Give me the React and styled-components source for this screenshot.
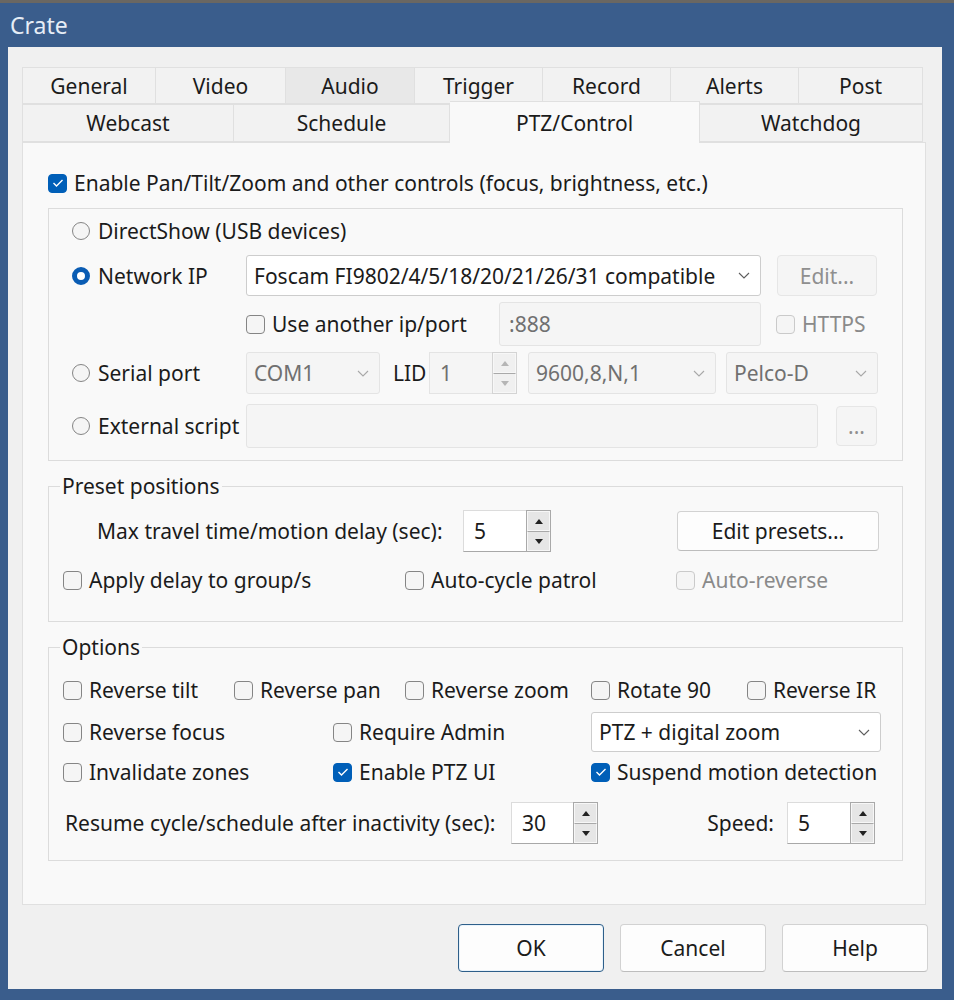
import React from 'react'
import styled, { createGlobalStyle } from 'styled-components'

const GlobalStyle = createGlobalStyle`
  html, body { margin: 0; padding: 0; background: #3a5d8c; }
  body { font-family: "Noto Sans", "Open Sans", sans-serif; color: #1b1b1b; font-size: 21px; }
  * { box-sizing: border-box; }
`;

const Frame = styled.div`
  width: 954px;
  height: 1000px;
  background: #3a5d8c;
  border-top: 3px solid #6a6762;
  display: flex;
  flex-direction: column;
`;

const TitleBar = styled.div`
  height: 44px;
  padding-left: 10px;
  display: flex;
  align-items: center;
  color: #e6edf6;
  font-size: 23px;
`;

const Client = styled.div`
  margin: 0 12px 0 8px;
  height: 942px;
  background: #f0f0f0;
  padding: 20px 16px 0 14px;
  display: flex;
  flex-direction: column;
`;

const TabRow = styled.div`
  display: flex;
  height: ${p => p.$h}px;
  margin-right: 3px;
`;

const Tab = styled.div`
  width: ${p => p.$w}px;
  display: flex;
  align-items: center;
  justify-content: center;
  background: ${p => (p.$active ? '#f9f9f9' : p.$hover ? '#e8e8e8' : '#f2f2f2')};
  border: 1px solid #e0e0e0;
  border-bottom: ${p => (p.$active ? 'none' : '1px solid #e0e0e0')};
  margin: ${p => (p.$active ? '-3px 0 -1px 0' : '0')};
  position: relative;
  z-index: ${p => (p.$active ? 1 : 0)};
  &:not(:first-child) { border-left: none; }
`;

const Pane = styled.div`
  height: 763px;
  background: #f9f9f9;
  border: 1px solid #e0e0e0;
  padding: 0 22px 0 25px;
  display: flex;
  flex-direction: column;
`;

const Line = styled.div`
  display: flex;
  align-items: center;
  height: ${p => p.$h || 30}px;
  margin-top: ${p => p.$mt || 0}px;
`;

const Group = styled.div`
  margin-top: 11px;
  border: 1px solid #dcdcdc;
  padding: 0 0 12px 23px;
`;

const Field = styled.fieldset`
  margin: ${p => p.$mt}px 0 0 0;
  border: 1px solid #dcdcdc;
  padding: 0 0 ${p => p.$pb}px 14px;
  min-width: 0;
`;

const Legend = styled.legend`
  padding: 0 2px;
  margin-left: -3px;
  line-height: 27px;
`;

const SourceRow = styled.div`
  display: grid;
  grid-template-columns: 174px 1fr;
  align-items: center;
  height: ${p => p.$h}px;
  margin-top: ${p => p.$mt}px;
`;

const Controls = styled.div`
  display: flex;
  align-items: center;
  height: 100%;
`;

const GridRow = styled.div`
  display: grid;
  grid-template-columns: ${p => p.$cols};
  align-items: center;
  height: ${p => p.$h || 30}px;
  margin-top: ${p => p.$mt || 0}px;
  padding-left: ${p => p.$pl || 0}px;
  padding-right: ${p => p.$pr || 0}px;
`;

const Label = styled.span`
  white-space: nowrap;
  flex: none;
  width: ${p => (p.$w ? `${p.$w}px` : 'auto')};
  color: ${p => (p.$disabled ? '#8a8a8a' : '#1b1b1b')};
  justify-self: ${p => (p.$end ? 'end' : 'start')};
  margin-left: ${p => p.$ml || 0}px;
  margin-right: ${p => p.$mr || 0}px;
`;

const CheckWrap = styled.label`
  display: flex;
  align-items: center;
  gap: 7px;
  flex: none;
  width: ${p => (p.$w ? `${p.$w}px` : 'auto')};
  margin-left: ${p => p.$ml || 0}px;
  white-space: nowrap;
  color: ${p => (p.$disabled ? '#8a8a8a' : '#1b1b1b')};
`;

const Box = styled.span`
  width: 19px;
  height: 19px;
  flex: none;
  border-radius: 4px;
  border: 1px solid ${p => (p.$checked ? '#005fb8' : p.$disabled ? '#cacaca' : '#858585')};
  background: ${p => (p.$checked ? '#005fb8' : '#f5f5f5')};
  display: flex;
  align-items: center;
  justify-content: center;
`;

const Dot = styled.span`
  width: 18px;
  height: 18px;
  flex: none;
  border-radius: 50%;
  border: ${p => (p.$checked ? '5px solid #0a5cb3' : '1px solid #858585')};
  background: ${p => (p.$checked ? '#ffffff' : '#f5f5f5')};
`;

const RadioWrap = styled.label`
  display: flex;
  align-items: center;
  gap: 8px;
  white-space: nowrap;
`;

const Select = styled.div`
  width: ${p => p.$w}px;
  height: ${p => p.$h || 41}px;
  flex: none;
  display: flex;
  align-items: center;
  justify-content: space-between;
  padding: 0 10px 0 7px;
  border-radius: 3px;
  background: ${p => (p.$disabled ? '#f5f5f5' : '#ffffff')};
  border: 1px solid ${p => (p.$disabled ? '#e4e4e4' : '#cdcdcd')};
  color: ${p => (p.$disabled ? '#707070' : '#1b1b1b')};
  margin-left: ${p => p.$ml || 0}px;
`;

const TextBox = styled.div`
  width: ${p => p.$w}px;
  height: ${p => p.$h || 44}px;
  flex: none;
  display: flex;
  align-items: center;
  padding-left: 9px;
  color: #707070;
  background: #f5f5f5;
  border: 1px solid #e4e4e4;
  border-radius: 3px;
  margin-left: ${p => p.$ml || 0}px;
`;

const Button = styled.div`
  width: ${p => p.$w}px;
  height: ${p => p.$h || 40}px;
  flex: none;
  display: flex;
  align-items: center;
  justify-content: center;
  border-radius: 4px;
  background: ${p => (p.$disabled ? '#f5f5f5' : '#fdfdfd')};
  color: ${p => (p.$disabled ? '#8f8f8f' : '#1b1b1b')};
  border: 1px solid ${p => (p.$disabled ? '#e6e6e6' : p.$focus ? '#2e5f8a' : '#d2d2d2')};
  border-bottom-color: ${p => (p.$disabled ? '#e6e6e6' : p.$focus ? '#2e5f8a' : '#bdbdbd')};
  box-shadow: ${p => (p.$focus ? 'inset 0 0 0 1px #e9f3fb' : 'none')};
  margin-left: ${p => p.$ml || 0}px;
`;

const SpinBox = styled.div`
  width: ${p => p.$w}px;
  height: 42px;
  flex: none;
  display: flex;
  margin-left: ${p => p.$ml || 0}px;
`;

const SpinField = styled.div`
  flex: 1;
  display: flex;
  align-items: center;
  padding-left: 10px;
  background: ${p => (p.$disabled ? '#f5f5f5' : '#ffffff')};
  color: ${p => (p.$disabled ? '#707070' : '#1b1b1b')};
  border: 1px solid ${p => (p.$disabled ? '#e4e4e4' : '#dcdcdc')};
  border-right: none;
  border-bottom-color: ${p => (p.$disabled ? '#e4e4e4' : '#a8a8a8')};
`;

const SpinButtons = styled.div`
  width: 25px;
  display: flex;
  flex-direction: column;
  border: 1px solid ${p => (p.$disabled ? '#d4d4d4' : '#a9a9a9')};
`;

const SpinHalf = styled.div`
  flex: 1;
  display: flex;
  align-items: center;
  justify-content: center;
  background: ${p => (p.$disabled ? '#f0f0f0' : '#e6e6e6')};
  border: 1px solid #f7f7f7;
  & + & { border-top: 1px solid ${p => (p.$disabled ? '#d4d4d4' : '#a9a9a9')}; }
`;

const Footer = styled.div`
  display: flex;
  justify-content: flex-end;
  gap: 16px;
  margin: 19px -2px 0 0;
`;

const Chevron = ({ color = '#5d5d5d' }) => (
  <svg width="12" height="7" viewBox="0 0 12 7">
    <polyline points="1,1 6,6 11,1" fill="none" stroke={color} strokeWidth="1.1" />
  </svg>
);

const Tick = () => (
  <svg width="12" height="10" viewBox="0 0 12 10">
    <polyline points="1.5,5 4.5,8 10.5,2" fill="none" stroke="#fff" strokeWidth="1.4" />
  </svg>
);

const Check = ({ checked, disabled, w, ml, children }) => (
  <CheckWrap $disabled={disabled} $w={w} $ml={ml}>
    <Box $checked={checked} $disabled={disabled}>{checked && <Tick />}</Box>
    {children}
  </CheckWrap>
);

const Radio = ({ checked, children }) => (
  <RadioWrap>
    <Dot $checked={checked} />
    {children}
  </RadioWrap>
);

const Arrow = ({ up, disabled }) => (
  <svg width="8" height="5" viewBox="0 0 8 5">
    <polygon points={up ? '0,5 4,0 8,5' : '0,0 4,5 8,0'} fill={disabled ? '#b5b5b5' : '#222'} />
  </svg>
);

const Spin = ({ value, w, ml, disabled }) => (
  <SpinBox $w={w} $ml={ml}>
    <SpinField $disabled={disabled}>{value}</SpinField>
    <SpinButtons $disabled={disabled}>
      <SpinHalf $disabled={disabled}><Arrow up disabled={disabled} /></SpinHalf>
      <SpinHalf $disabled={disabled}><Arrow disabled={disabled} /></SpinHalf>
    </SpinButtons>
  </SpinBox>
);

const Dropdown = ({ children, w, h, ml, disabled }) => (
  <Select $w={w} $h={h} $ml={ml} $disabled={disabled}>
    <span>{children}</span>
    <Chevron color={disabled ? '#a8a8a8' : '#5d5d5d'} />
  </Select>
);

const row1 = [['General', 134], ['Video', 130], ['Audio', 129, true], ['Trigger', 128], ['Record', 128], ['Alerts', 128], ['Post', 124]];
const row2 = [['Webcast', 212], ['Schedule', 216], ['PTZ/Control', 250, false, true], ['Watchdog', 223]];

export default function App() {
  return (
    <Frame>
      <GlobalStyle />
      <TitleBar>Crate</TitleBar>
      <Client>
        <TabRow $h={37}>
          {row1.map(([name, w, hover]) => <Tab key={name} $w={w} $hover={hover}>{name}</Tab>)}
        </TabRow>
        <TabRow $h={38}>
          {row2.map(([name, w, hover, active]) => <Tab key={name} $w={w} $active={active}>{name}</Tab>)}
        </TabRow>
        <Pane>
          <Line $h={28} $mt={26}>
            <Check checked>Enable Pan/Tilt/Zoom and other controls (focus, brightness, etc.)</Check>
          </Line>

          <Group>
            <SourceRow $h={30} $mt={7}>
              <Radio>DirectShow (USB devices)</Radio>
            </SourceRow>
            <SourceRow $h={41} $mt={9}>
              <Radio checked>Network IP</Radio>
              <Controls>
                <Dropdown w={515}>Foscam FI9802/4/5/18/20/21/26/31 compatible</Dropdown>
                <Button $w={100} $h={41} $ml={16} $disabled>Edit...</Button>
              </Controls>
            </SourceRow>
            <SourceRow $h={44} $mt={6}>
              <span />
              <Controls>
                <Check w={253}>Use another ip/port</Check>
                <TextBox $w={262}>:888</TextBox>
                <Check disabled ml={15}>HTTPS</Check>
              </Controls>
            </SourceRow>
            <SourceRow $h={42} $mt={6}>
              <Radio>Serial port</Radio>
              <Controls>
                <Dropdown w={134} h={42} disabled>COM1</Dropdown>
                <Label $w={36} $ml={13}>LID</Label>
                <Spin value="1" w={88} disabled />
                <Dropdown w={188} h={42} ml={11} disabled>9600,8,N,1</Dropdown>
                <Dropdown w={152} h={42} ml={10} disabled>Pelco-D</Dropdown>
              </Controls>
            </SourceRow>
            <SourceRow $h={44} $mt={10}>
              <Radio>External script</Radio>
              <Controls>
                <TextBox $w={572} />
                <Button $w={41} $h={40} $ml={18} $disabled>...</Button>
              </Controls>
            </SourceRow>
          </Group>

          <Field $mt={12} $pb={26}>
            <Legend>Preset positions</Legend>
            <GridRow $cols="366px 88px 1fr 202px" $h={42} $mt={10} $pl={34} $pr={23}>
              <Label>Max travel time/motion delay (sec):</Label>
              <Spin value="5" w={88} />
              <span />
              <Button $w={202} $h={40}>Edit presets...</Button>
            </GridRow>
            <GridRow $cols="342px 271px 1fr" $h={30} $mt={13}>
              <Check>Apply delay to group/s</Check>
              <Check>Auto-cycle patrol</Check>
              <Check disabled>Auto-reverse</Check>
            </GridRow>
          </Field>

          <Field $mt={12} $pb={16}>
            <Legend>Options</Legend>
            <GridRow $cols="171px 171px 186px 156px 1fr" $h={30} $mt={14}>
              <Check>Reverse tilt</Check>
              <Check>Reverse pan</Check>
              <Check>Reverse zoom</Check>
              <Check>Rotate 90</Check>
              <Check>Reverse IR</Check>
            </GridRow>
            <GridRow $cols="270px 258px 1fr" $h={40} $mt={7}>
              <Check>Reverse focus</Check>
              <Check>Require Admin</Check>
              <Dropdown w={290} h={40}>PTZ + digital zoom</Dropdown>
            </GridRow>
            <GridRow $cols="270px 258px 1fr" $h={30} $mt={5}>
              <Check>Invalidate zones</Check>
              <Check checked>Enable PTZ UI</Check>
              <Check checked>Suspend motion detection</Check>
            </GridRow>
            <GridRow $cols="448px 87px 1fr 88px" $h={42} $mt={15} $pr={27}>
              <Label $ml={2}>Resume cycle/schedule after inactivity (sec):</Label>
              <Spin value="30" w={87} />
              <Label $end $mr={13}>Speed:</Label>
              <Spin value="5" w={88} />
            </GridRow>
          </Field>
        </Pane>
        <Footer>
          <Button $w={146} $h={48} $focus>OK</Button>
          <Button $w={146} $h={48}>Cancel</Button>
          <Button $w={146} $h={48}>Help</Button>
        </Footer>
      </Client>
    </Frame>
  );
}
